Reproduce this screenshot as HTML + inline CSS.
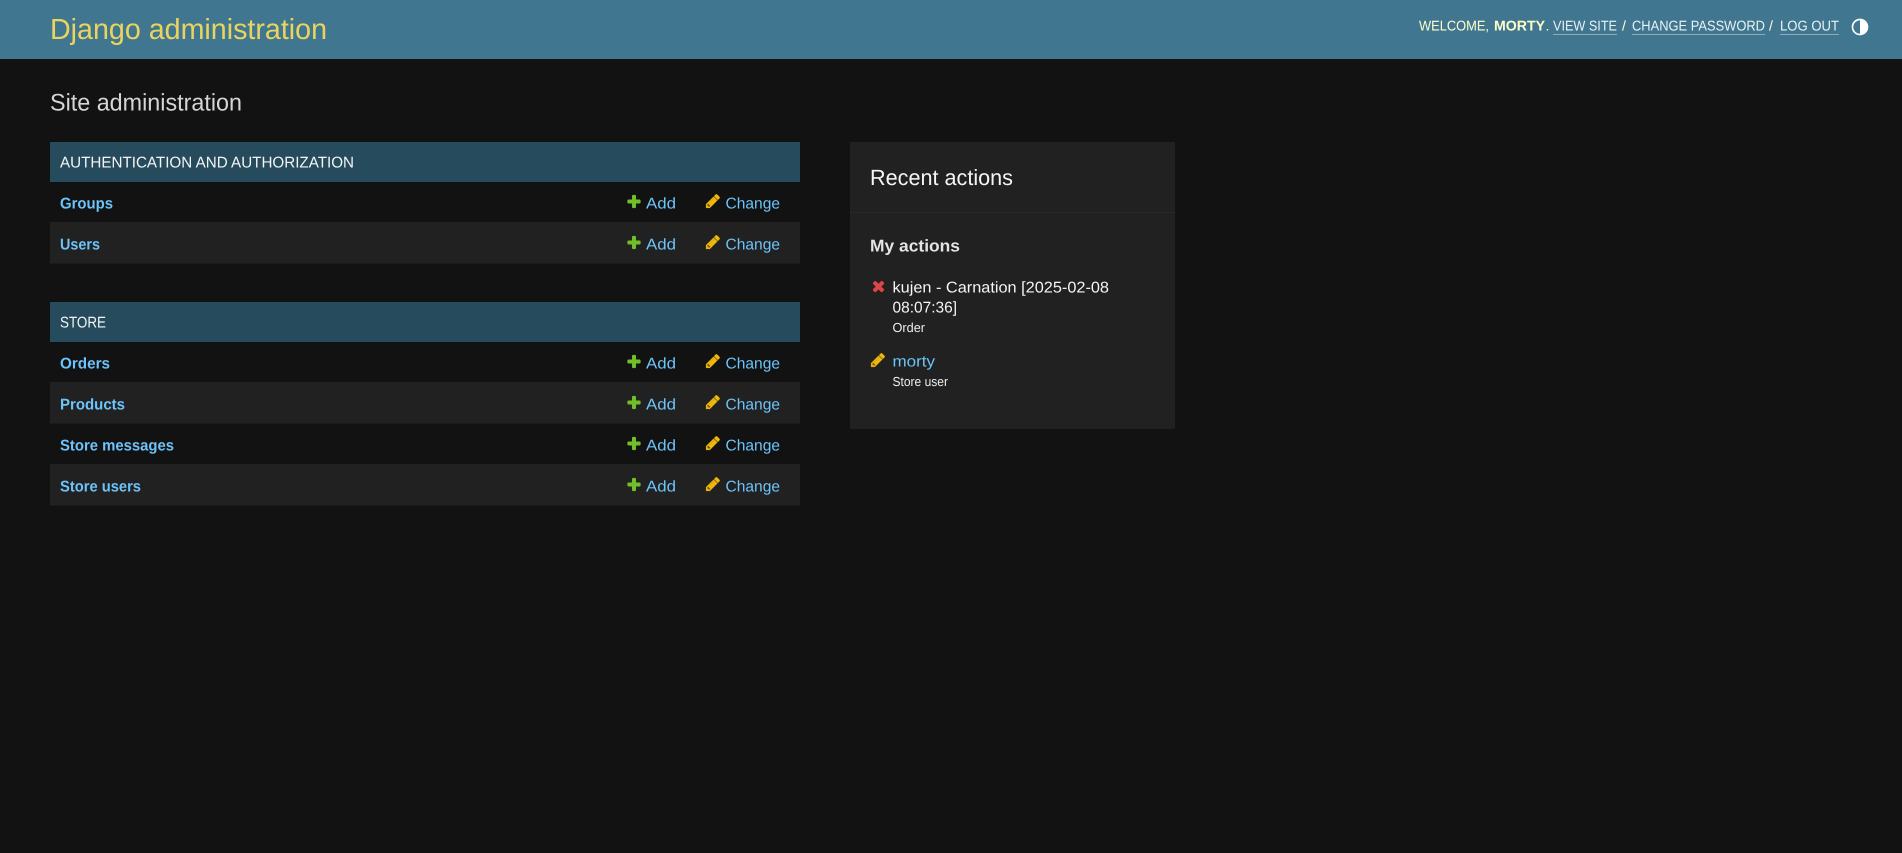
<!DOCTYPE html>
<html lang="en">
<head>
<meta charset="utf-8">
<title>Site administration | Django site admin</title>
<style>
html,body{margin:0;padding:0;background:#121212;width:1902px;height:853px;overflow:hidden}
svg{display:block;position:absolute;left:0;top:0}
text{font-family:"Liberation Sans",sans-serif;text-rendering:geometricPrecision}
.cap{font-size:15.6px;fill:#f5f5f5}
.m{font-size:15.6px;font-weight:700;fill:#6cc4fa}
.l{font-size:15.6px;fill:#6cc4fa}
.u{font-size:14.2px;fill:#ffffcc}
.ul{font-size:14.2px;fill:#e8f4f5}
</style>
</head>
<body>
<svg width="1902" height="853" viewBox="0 0 1902 853" xmlns="http://www.w3.org/2000/svg">
<defs>
<symbol id="add" viewBox="0 0 1792 1792"><path fill="#70bf2b" stroke="#70bf2b" stroke-width="70" d="M1600 796v192q0 40-28 68t-68 28h-416v416q0 40-28 68t-68 28h-192q-40 0-68-28t-28-68v-416h-416q-40 0-68-28t-28-68v-192q0-40 28-68t68-28h416v-416q0-40 28-68t68-28h192q40 0 68 28t28 68v416h416q40 0 68 28t28 68z"/></symbol>
<symbol id="chg" viewBox="0 0 1792 1792"><path fill="#efb80b" stroke="#efb80b" stroke-width="50" d="M491 1536l91-91-235-235-91 91v107h128v128h107zm523-928q0-22-22-22-10 0-17 7l-542 542q-7 7-7 17 0 22 22 22 10 0 17-7l542-542q7-7 7-17zm-54-192l416 416-832 832h-416v-416zm683 96q0 53-37 90l-166 166-416-416 166-165q36-38 90-38 53 0 91 38l235 234q37 39 37 91z"/></symbol>
<symbol id="del" viewBox="0 0 1792 1792"><path fill="#dd4646" stroke="#dd4646" stroke-width="70" d="M1490 1322q0 40-28 68l-136 136q-28 28-68 28t-68-28l-294-294-294 294q-28 28-68 28t-68-28l-136-136q-28-28-28-68t28-68l294-294-294-294q-28-28-28-68t28-68l136-136q28-28 68-28t68 28l294 294 294-294q28-28 68-28t68 28l136 136q28 28 28 68t-28 68l-294 294 294 294q28 28 28 68z"/></symbol>
</defs>

<rect x="0" y="0" width="1902" height="59" fill="#417690"/>
<text x="50" y="39" font-size="29" fill="#e9d55e" textLength="277" lengthAdjust="spacingAndGlyphs">Django administration</text>

<text x="1419" y="30.500" class="u" textLength="70" lengthAdjust="spacingAndGlyphs">WELCOME,</text>
<text x="1494" y="30.500" class="u" style="font-weight:700" textLength="51" lengthAdjust="spacingAndGlyphs">MORTY</text>
<text x="1545.500" y="30.500" class="u">.</text>
<text x="1553" y="30.500" class="ul" textLength="64" lengthAdjust="spacingAndGlyphs">VIEW SITE</text>
<rect x="1553" y="34" width="64" height="1" fill="#8fabb9"/>
<text x="1622" y="30.500" class="u">/</text>
<text x="1632" y="30.500" class="ul" textLength="133" lengthAdjust="spacingAndGlyphs">CHANGE PASSWORD</text>
<rect x="1632" y="34" width="133" height="1" fill="#8fabb9"/>
<text x="1769" y="30.500" class="u">/</text>
<text x="1780" y="30.500" class="ul" textLength="59" lengthAdjust="spacingAndGlyphs">LOG OUT</text>
<rect x="1780" y="34" width="59" height="1" fill="#8fabb9"/>
<svg x="1850" y="17" width="20" height="20" viewBox="0 0 24 24"><path fill="#ffffff" d="M12 22C6.477 22 2 17.523 2 12S6.477 2 12 2s10 4.477 10 10-4.477 10-10 10zm0-2V4a8 8 0 1 0 0 16z"/></svg>

<text x="50" y="110.500" font-size="24" fill="#d6d6d6" textLength="192" lengthAdjust="spacingAndGlyphs">Site administration</text>

<!-- Authentication and authorization -->
<rect x="50" y="142" width="750" height="40" fill="#264b5d"/>
<text x="60" y="167.500" class="cap" textLength="294" lengthAdjust="spacingAndGlyphs">AUTHENTICATION AND AUTHORIZATION</text>
<rect x="50" y="222" width="750" height="41.500" fill="#212121"/>
<text x="60" y="208.500" class="m" textLength="53" lengthAdjust="spacingAndGlyphs">Groups</text>
<use href="#add" x="626" y="193.500" width="16" height="16"/>
<text x="646" y="208.500" class="l" textLength="30" lengthAdjust="spacingAndGlyphs">Add</text>
<use href="#chg" x="705" y="193" width="16" height="16"/>
<text x="725.500" y="208.500" class="l" textLength="54.500" lengthAdjust="spacingAndGlyphs">Change</text>

<text x="60" y="249.500" class="m" textLength="40" lengthAdjust="spacingAndGlyphs">Users</text>
<use href="#add" x="626" y="234.500" width="16" height="16"/>
<text x="646" y="249.500" class="l" textLength="30" lengthAdjust="spacingAndGlyphs">Add</text>
<use href="#chg" x="705" y="234" width="16" height="16"/>
<text x="725.500" y="249.500" class="l" textLength="54.500" lengthAdjust="spacingAndGlyphs">Change</text>

<!-- Store -->
<rect x="50" y="302" width="750" height="40" fill="#264b5d"/>
<text x="60" y="327.500" class="cap" textLength="46" lengthAdjust="spacingAndGlyphs">STORE</text>
<rect x="50" y="382" width="750" height="41.500" fill="#212121"/>
<rect x="50" y="464" width="750" height="41.500" fill="#212121"/>

<text x="60" y="368.500" class="m" textLength="50" lengthAdjust="spacingAndGlyphs">Orders</text>
<use href="#add" x="626" y="353.500" width="16" height="16"/>
<text x="646" y="368.500" class="l" textLength="30" lengthAdjust="spacingAndGlyphs">Add</text>
<use href="#chg" x="705" y="353" width="16" height="16"/>
<text x="725.500" y="368.500" class="l" textLength="54.500" lengthAdjust="spacingAndGlyphs">Change</text>

<text x="60" y="409.500" class="m" textLength="65" lengthAdjust="spacingAndGlyphs">Products</text>
<use href="#add" x="626" y="394.500" width="16" height="16"/>
<text x="646" y="409.500" class="l" textLength="30" lengthAdjust="spacingAndGlyphs">Add</text>
<use href="#chg" x="705" y="394" width="16" height="16"/>
<text x="725.500" y="409.500" class="l" textLength="54.500" lengthAdjust="spacingAndGlyphs">Change</text>

<text x="60" y="450.500" class="m" textLength="114" lengthAdjust="spacingAndGlyphs">Store messages</text>
<use href="#add" x="626" y="435.500" width="16" height="16"/>
<text x="646" y="450.500" class="l" textLength="30" lengthAdjust="spacingAndGlyphs">Add</text>
<use href="#chg" x="705" y="435" width="16" height="16"/>
<text x="725.500" y="450.500" class="l" textLength="54.500" lengthAdjust="spacingAndGlyphs">Change</text>

<text x="60" y="491.500" class="m" textLength="81" lengthAdjust="spacingAndGlyphs">Store users</text>
<use href="#add" x="626" y="476.500" width="16" height="16"/>
<text x="646" y="491.500" class="l" textLength="30" lengthAdjust="spacingAndGlyphs">Add</text>
<use href="#chg" x="705" y="476" width="16" height="16"/>
<text x="725.500" y="491.500" class="l" textLength="54.500" lengthAdjust="spacingAndGlyphs">Change</text>

<!-- Sidebar -->
<rect x="850" y="142" width="325" height="287" fill="#212121"/>
<rect x="850" y="212" width="325" height="1" fill="#272727"/>
<text x="870" y="185" font-size="22" fill="#f5f5f5" textLength="143" lengthAdjust="spacingAndGlyphs">Recent actions</text>
<text x="870" y="251.500" font-size="17" font-weight="700" fill="#e4e4e4" textLength="90" lengthAdjust="spacingAndGlyphs">My actions</text>

<use href="#del" x="870.500" y="278" width="16" height="16"/>
<text x="892.500" y="292.500" font-size="15.6" fill="#f5f5f5" textLength="216.500" lengthAdjust="spacingAndGlyphs">kujen - Carnation [2025-02-08</text>
<text x="892.500" y="312.500" font-size="15.6" fill="#f5f5f5" textLength="64.500" lengthAdjust="spacingAndGlyphs">08:07:36]</text>
<text x="892.500" y="332" font-size="13" fill="#eeeeee" textLength="32.500" lengthAdjust="spacingAndGlyphs">Order</text>

<use href="#chg" x="870" y="352" width="16" height="16"/>
<text x="892.500" y="366.500" class="l" textLength="42.500" lengthAdjust="spacingAndGlyphs">morty</text>
<text x="892.500" y="386" font-size="13" fill="#eeeeee" textLength="55.500" lengthAdjust="spacingAndGlyphs">Store user</text>
</svg>
</body>
</html>
